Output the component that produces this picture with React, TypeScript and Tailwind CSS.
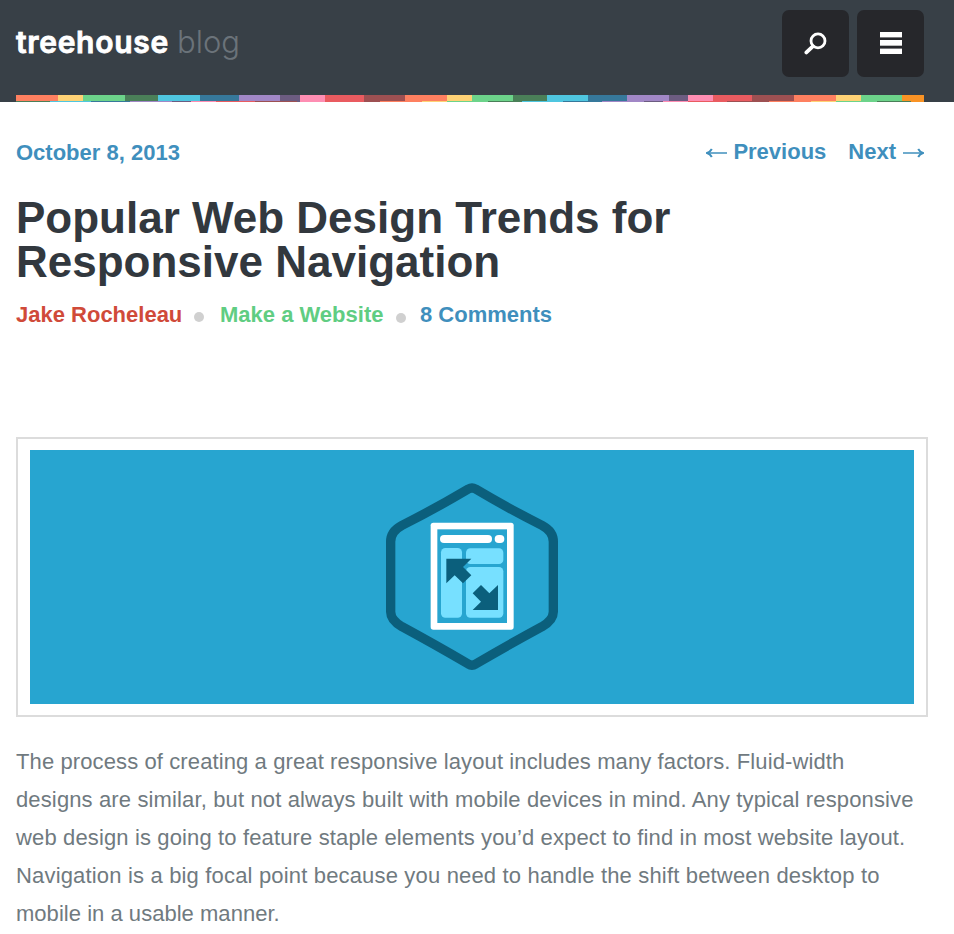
const STRIPE_TOP: [number, string][] = [
  [42, '#fe8060'], [25, '#fed275'], [42, '#6cd38a'], [33, '#4a7f58'], [42, '#4fc6e0'], [39, '#36789b'],
  [41, '#a187c6'], [20, '#6c5c81'], [25, '#fe8eb3'], [39, '#e95b60'], [41, '#9d5052'],
  [42, '#fe8060'], [25, '#fed275'], [41, '#6cd38a'], [34, '#4a7f58'], [41, '#4fc6e0'], [39, '#36789b'],
  [42, '#a187c6'], [19, '#6c5c81'], [25, '#fe8eb3'], [39, '#e95b60'], [42, '#9d5052'],
  [42, '#fe8060'], [25, '#fed275'], [41, '#6cd38a'], [22, '#f99325'],
];

const STRIPE_BOTTOM: [number, string][] = [
  [34, '#4a7f58'], [41, '#4fc6e0'], [39, '#36789b'], [42, '#a187c6'], [19, '#6c5c81'], [25, '#fe8eb3'],
  [39, '#e95b60'], [42, '#9d5052'], [3, '#6c5c81'], [25, '#fe8eb3'], [39, '#e95b60'], [16, '#9d5052'],
  [42, '#fe8060'], [25, '#fed275'], [41, '#6cd38a'], [34, '#4a7f58'], [41, '#4fc6e0'], [39, '#36789b'],
  [42, '#a187c6'], [19, '#6c5c81'], [25, '#fe8eb3'], [39, '#e95b60'], [42, '#9d5052'],
  [42, '#fe8060'], [25, '#fed275'], [41, '#6cd38a'], [34, '#4a7f58'], [13, '#f99325'],
];

function Stripe({ bands, className }: { bands: [number, string][]; className: string }) {
  return (
    <div className={`flex w-[908px] ${className}`}>
      {bands.map(([width, color], i) => (
        <div key={i} className="shrink-0" style={{ width, backgroundColor: color }} />
      ))}
    </div>
  );
}

function Header() {
  return (
    <header className="h-[102px] bg-[#384047] pl-4">
      <div className="flex h-[95px] w-[908px] items-start justify-between">
        <div className="flex items-baseline pt-[21px] font-['Inter',sans-serif] leading-[42px]">
          <span className="w-[161px] whitespace-nowrap text-[30px] font-semibold tracking-[0.7px] text-white [-webkit-text-stroke:0.8px_#fff] [stroke-linejoin:round]">treehouse</span>
          <span className="whitespace-nowrap text-[31px] font-light tracking-[0px] text-[#6b737a]">blog</span>
        </div>
        <div className="flex gap-2 pt-[10px]">
          <button className="flex h-[67px] w-[67px] items-center justify-center rounded-[7px] bg-[#26272b]" aria-label="Search">
            <svg width="24" height="24" viewBox="0 0 24 24" fill="none" stroke="#fff">
              <circle cx="14" cy="8.9" r="7" strokeWidth="2.8" />
              <path d="M8.8 14.4 2.4 20.4" strokeWidth="3.8" strokeLinecap="round" />
            </svg>
          </button>
          <button className="flex h-[67px] w-[67px] flex-col items-center pt-[22px] rounded-[7px] bg-[#26272b]" aria-label="Menu">
            <span className="h-[6px] w-[22px] border-b border-[#7b7b7e] bg-white" />
            <span className="mt-[2px] h-[6px] w-[22px] border-b border-[#bbb] bg-white" />
            <span className="mt-[2px] h-[6px] w-[22px] border-t border-[#7b7b7e] bg-white" />
          </button>
        </div>
      </div>
      <Stripe bands={STRIPE_TOP} className="h-[6px]" />
      <Stripe bands={STRIPE_BOTTOM} className="h-px" />
    </header>
  );
}

function Arrow({ flip }: { flip?: boolean }) {
  return (
    <svg width="21" height="12" viewBox="0 0 21 12" fill="none" stroke="#3f8fbd" strokeWidth="1.5" className={flip ? 'mt-[10px] rotate-180' : 'mt-[10px]'}>
      <path d="M21 6H2" />
      <path d="M5.8 2C4.8 3.8 3.4 5.3 1 6 3.4 6.7 4.8 8.2 5.8 10" strokeWidth="2" />
    </svg>
  );
}

function ResponsiveBadge() {
  return (
    <svg width="200" height="210" viewBox="0 0 600 630" aria-hidden="true">
      <path
        d="M295 57Q306 51 317 57Q420 118 516 166Q550 184 550 215V425Q550 450 516 470Q420 522 317 582Q306 589 295 582Q192 522 96 470Q62 450 62 425V215Q62 184 96 166Q192 118 295 57Z"
        fill="none" stroke="#0b5f7c" strokeWidth="28"
      />
      <rect x="182" y="158" width="249" height="321" rx="8" fill="#fff" />
      <rect x="202" y="178" width="209" height="281" fill="#27a5d0" />
      <rect x="210" y="195" width="156" height="24" rx="12" fill="#fff" />
      <rect x="374" y="195" width="29" height="24" rx="12" fill="#fff" />
      <g fill="#77e0ff">
        <rect x="213" y="234" width="63" height="209" rx="13" />
        <rect x="288" y="235" width="112" height="47" rx="13" />
        <rect x="288" y="291" width="112" height="152" rx="13" />
      </g>
      <g fill="#0b5f7c">
        <path d="M229 266H304L279 291 304 316 279 340 254 316 229 340Z" />
        <path d="M384 345V420H308L333 395 308 370 333 345 358 370Z" />
      </g>
    </svg>
  );
}

export default function App() {
  return (
    <div className="h-[934px] overflow-hidden bg-white font-['Liberation_Sans',Arial,sans-serif]">
      <Header />
      <main className="px-4">
        <div className="flex h-[88px] w-[908px] justify-between text-[22px] leading-[30px] font-bold text-[#3f8fbd]">
          <span className="pt-[36px]">October 8, 2013</span>
          <nav className="flex items-start pt-[35px]">
            <a className="flex items-start gap-[6px]"><Arrow /><span>Previous</span></a>
            <a className="ml-[22px] flex items-start gap-[7px]"><span>Next</span><Arrow flip /></a>
          </nav>
        </div>
        <h1 className="pt-[6px] text-[44px] leading-[44px] font-bold whitespace-nowrap text-[#32383e]">
          Popular Web Design Trends for
          <br />
          Responsive Navigation
        </h1>
        <div className="flex h-[153px] pt-[16px] text-[22px] leading-[30px] font-bold whitespace-nowrap">
          <span className="w-[178px] text-[#d04a39]">Jake Rocheleau</span>
          <span className="mt-[12px] h-[10px] w-[10px] rounded-full bg-[#d0d0d0]" />
          <span className="ml-[16px] w-[176px] text-[#60cd82]">Make a Website</span>
          <span className="mt-[13px] h-[10px] w-[10px] rounded-full bg-[#d0d0d0]" />
          <span className="ml-[14px] text-[#3f8fbd]">8 Comments</span>
        </div>
        <div className="h-[280px] w-[912px] border-2 border-[#dcdcdc] px-3 py-[11px]">
          <div className="flex h-[254px] items-start bg-[#27a5d0] pt-[20px] pl-[340px]">
            <ResponsiveBadge />
          </div>
        </div>
        <p className="pt-[26px] text-[22px] leading-[38px] whitespace-nowrap text-[#707a7f]">
          <span className="block tracking-[0.108px]">The process of creating a great responsive layout includes many factors. Fluid-width</span>
          <span className="block tracking-[0.132px]">designs are similar, but not always built with mobile devices in mind. Any typical responsive</span>
          <span className="block tracking-[0.137px]">web design is going to feature staple elements you’d expect to find in most website layout.</span>
          <span className="block tracking-[0.17px]">Navigation is a big focal point because you need to handle the shift between desktop to</span>
          <span className="block tracking-[0.03px]">mobile in a usable manner.</span>
        </p>
      </main>
    </div>
  );
}
